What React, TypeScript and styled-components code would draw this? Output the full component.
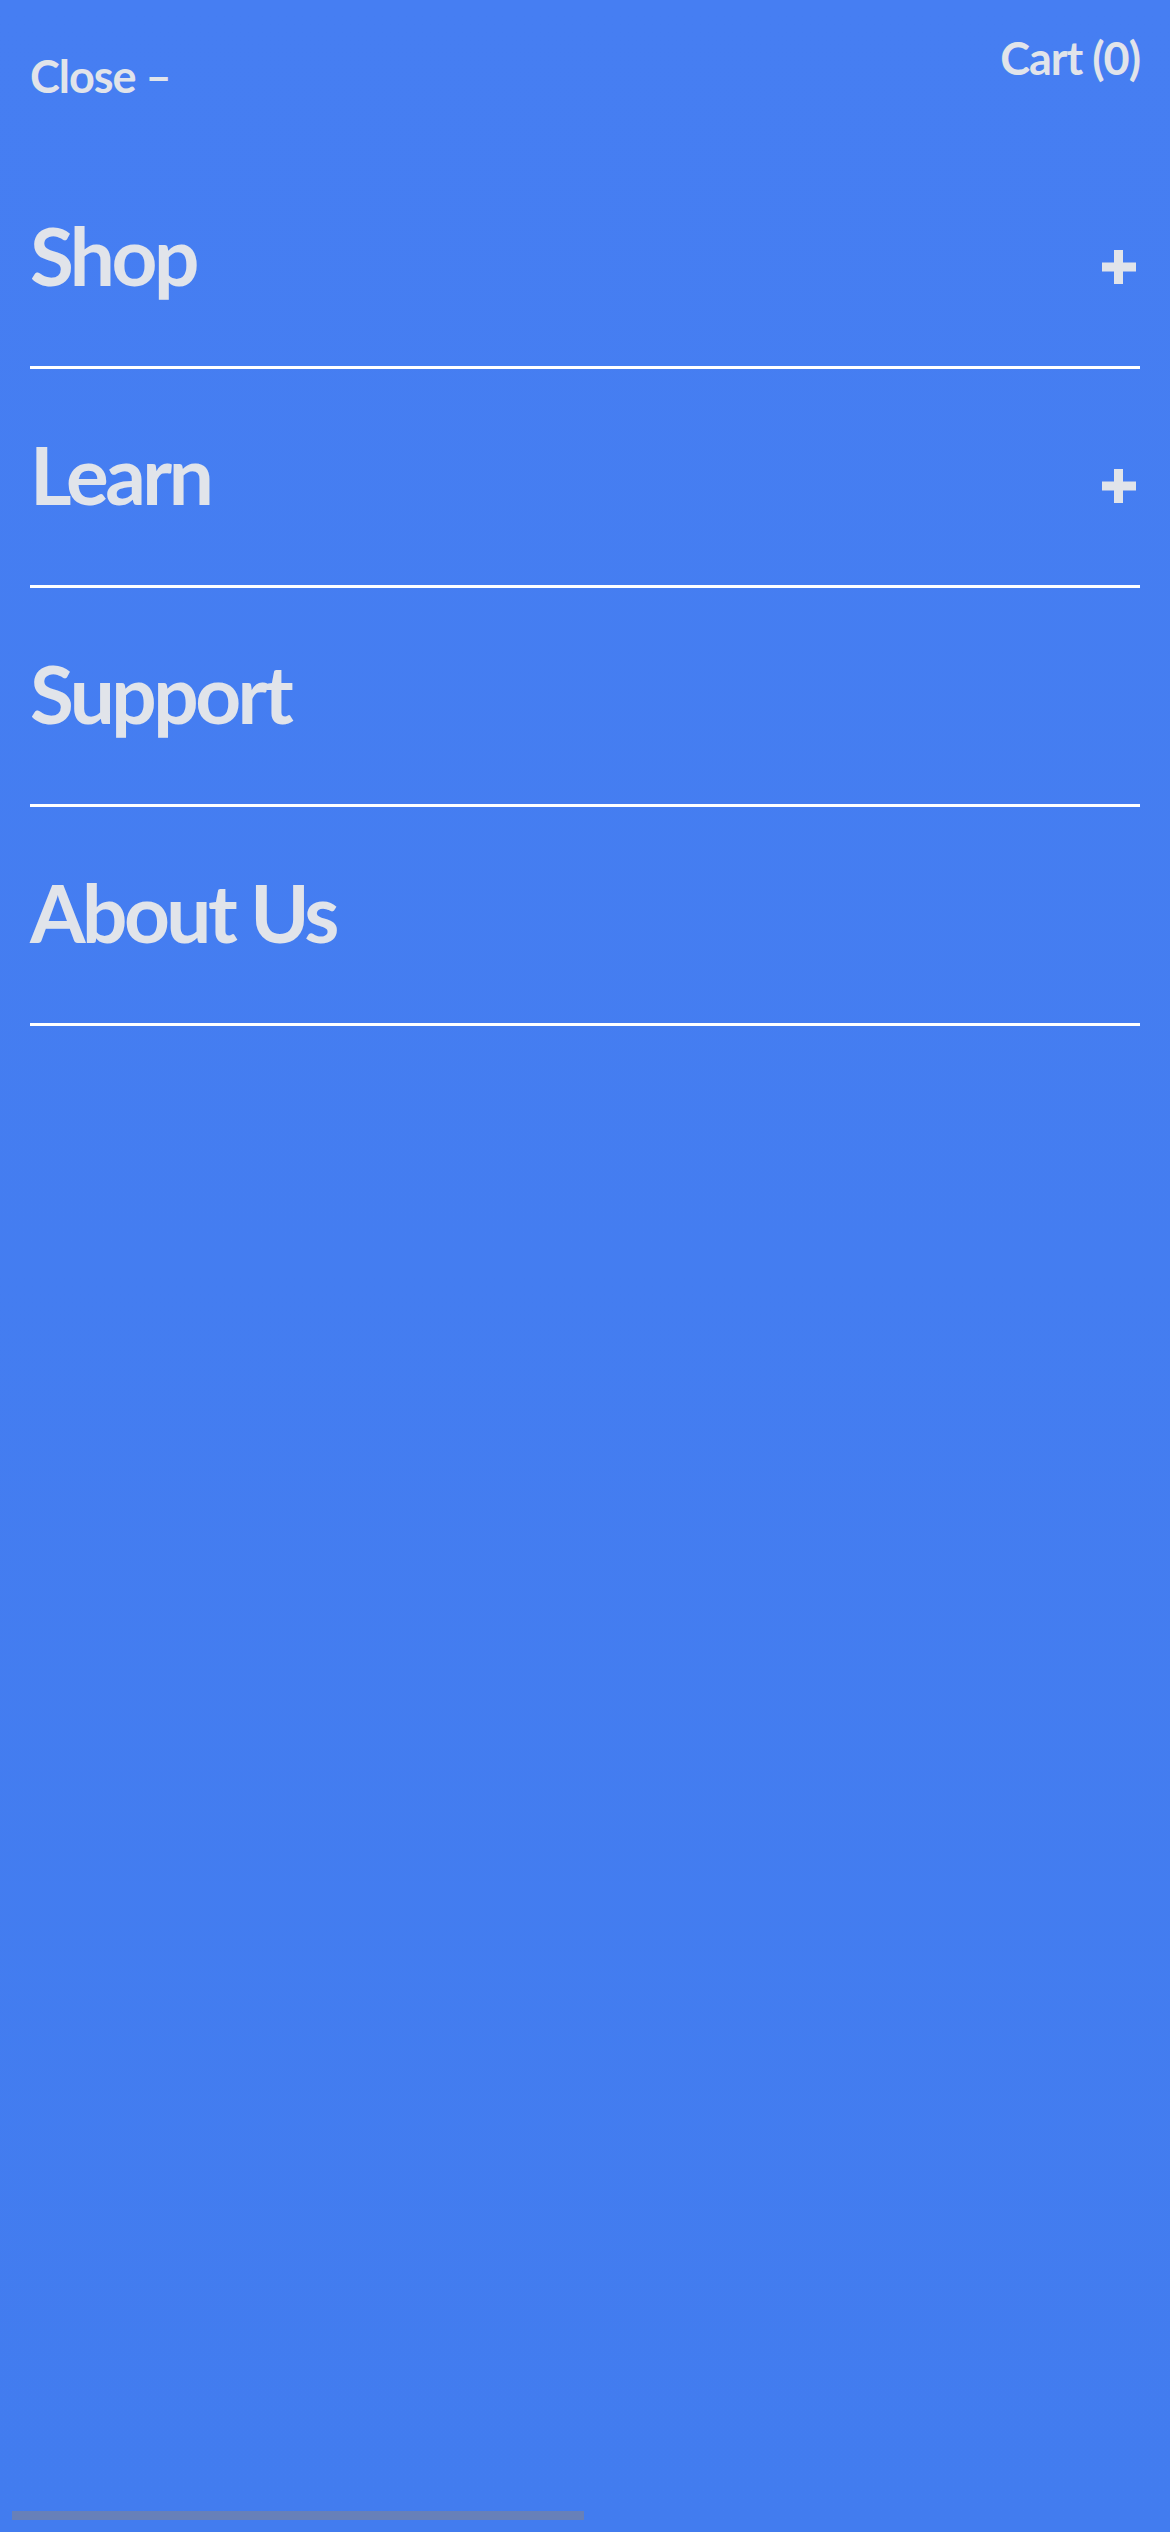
import React from "react";
import styled, { createGlobalStyle } from "styled-components";

const GlobalStyle = createGlobalStyle`
  html, body {
    margin: 0;
    padding: 0;
    background: #457df1;
  }
  * {
    box-sizing: border-box;
  }
`;

const Page = styled.div`
  position: relative;
  min-height: 2532px;
  background: linear-gradient(#467ef2, #427cef);
  color: #e1e4ea;
  font-family: Lato, "Noto Sans", sans-serif;
  padding: 0 30px;
`;

const Header = styled.header`
  height: 150px;
  display: flex;
  justify-content: space-between;
  align-items: flex-start;
`;

const HeaderLink = styled.button<{ $top: number }>`
  margin-top: ${(p) => p.$top}px;
  padding: 0;
  border: none;
  background: none;
  color: inherit;
  font-family: inherit;
  font-size: 45px;
  line-height: 44px;
  font-weight: 700;
  letter-spacing: -1px;
  cursor: pointer;
`;

const Nav = styled.nav`
  display: flex;
  flex-direction: column;
`;

const Item = styled.div`
  height: 219px;
  display: flex;
  justify-content: space-between;
  align-items: flex-start;
  padding-top: 65px;
  border-bottom: 3px solid #ffffff;
`;

const Label = styled.span`
  font-size: 80px;
  line-height: 80px;
  font-weight: 700;
  letter-spacing: -3.5px;
`;

const Plus = styled.svg`
  margin-top: 35px;
  margin-right: 4px;
`;

const ScrollThumb = styled.div`
  position: absolute;
  left: 12px;
  bottom: 12px;
  width: 572px;
  height: 9px;
  background: #6780b9;
`;

const items = [
  { label: "Shop", expandable: true },
  { label: "Learn", expandable: true },
  { label: "Support", expandable: false },
  { label: "About Us", expandable: false },
];

const PlusIcon = () => (
  <Plus width="34" height="34" viewBox="0 0 34 34">
    <rect x="12" y="0" width="9" height="34" fill="#e1e4ea" />
    <rect x="0" y="12.5" width="34" height="9" fill="#e1e4ea" />
  </Plus>
);

const App: React.FC = () => {
  return (
    <>
      <GlobalStyle />
      <Page>
        <Header>
          <HeaderLink $top={54}>Close –</HeaderLink>
          <HeaderLink $top={36}>Cart (0)</HeaderLink>
        </Header>
        <Nav>
          {items.map((item) => (
            <Item key={item.label}>
              <Label>{item.label}</Label>
              {item.expandable && <PlusIcon />}
            </Item>
          ))}
        </Nav>
        <ScrollThumb />
      </Page>
    </>
  );
};

export default App;
